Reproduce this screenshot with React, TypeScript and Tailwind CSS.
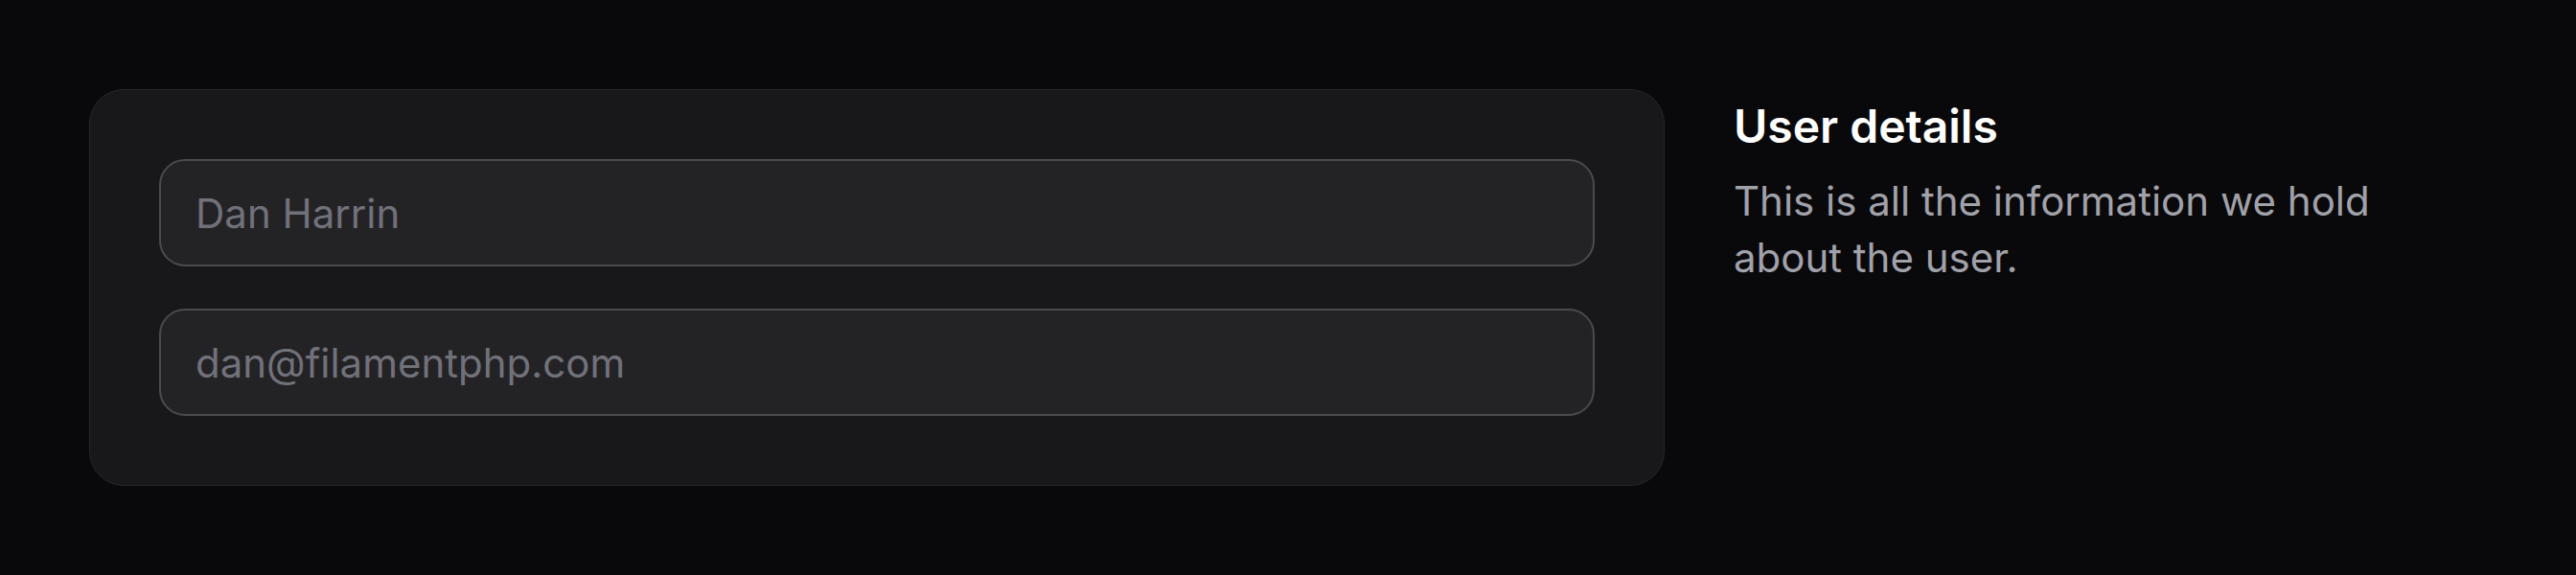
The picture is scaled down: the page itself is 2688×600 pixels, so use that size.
export default function App() {
  const fields = ["Dan Harrin", "dan@filamentphp.com"];

  return (
    <div
      className="min-h-[600px] w-full bg-[#09090b] px-[93px] pt-[93px]"
      style={{ fontFamily: "Inter, 'Noto Sans', sans-serif" }}
    >
      <div className="grid grid-cols-3 gap-x-[72px]">
        {/* form card */}
        <div className="col-span-2 flex flex-col gap-[44px] rounded-[36px] border border-[#27272a] bg-[#18181b] p-[72px]">
          {fields.map((value) => (
            <div
              key={value}
              className="flex h-[112px] items-center rounded-[27px] border-2 border-[#4a4a4f] bg-[#232326] px-[36px] text-[42px] text-[#71717a]"
            >
              {value}
            </div>
          ))}
        </div>

        {/* section description */}
        <div className="pt-[3px]">
          <h2 className="text-[48px] font-semibold leading-[72px] text-white">User details</h2>
          <p className="mt-3 max-w-[760px] text-[42px] leading-[59px] text-[#a1a1aa]">
            This is all the information we hold about the user.
          </p>
        </div>
      </div>
    </div>
  );
}
